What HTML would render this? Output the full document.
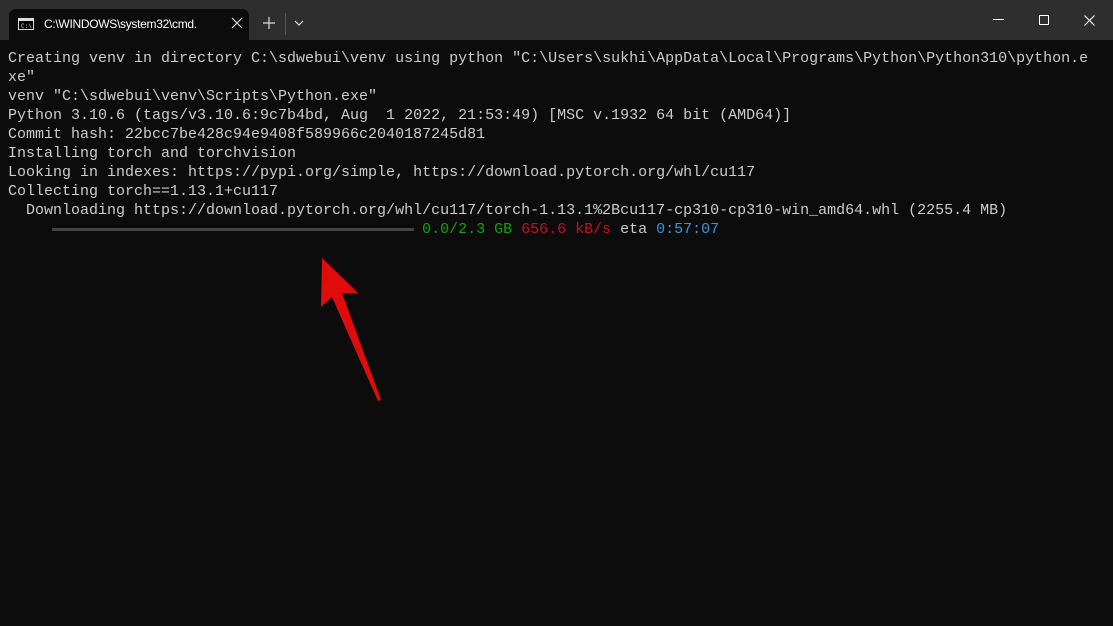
<!DOCTYPE html>
<html><head><style>
*{margin:0;padding:0;box-sizing:border-box}
body{width:1113px;height:626px;overflow:hidden;background:#0c0c0c;position:relative;font-family:"Liberation Sans",sans-serif}
#bar{position:absolute;left:0;top:0;width:1113px;height:40px;background:#2e2e2e}
#tab{position:absolute;left:9px;top:9px;width:240px;height:31px;background:#0c0c0c;border-radius:7px 7px 0 0}
#tab .t{position:absolute;left:35px;top:8px;color:#fff;font-size:12px;letter-spacing:-0.3px}
#term{position:absolute;left:8px;top:49px;font-family:"Liberation Mono",monospace;font-size:15px;line-height:19px;color:#cccccc;white-space:pre}
.g{color:#13a10e}.r{color:#c50f1f}.b{color:#3a96dd}
</style></head><body>
<div id="bar"></div>
<div id="tab">
<svg style="position:absolute;left:9px;top:9px" width="16" height="12"><rect x="0.5" y="0.5" width="15" height="11" fill="#000" stroke="#ddd"/><rect x="1" y="1" width="14" height="2" fill="#ddd"/><text x="3" y="10" font-size="6" fill="#ddd" font-family="Liberation Mono">C:\</text></svg>
<div class="t">C:\WINDOWS\system32\cmd.</div>
<svg style="position:absolute;left:222px;top:8px" width="12" height="12"><path d="M1 1L11 11M11 1L1 11" stroke="#ddd" stroke-width="1.2"/></svg>
</div>
<svg style="position:absolute;left:263px;top:17px" width="12" height="12"><path d="M6 0V12M0 6H12" stroke="#ddd" stroke-width="1.2"/></svg>
<div style="position:absolute;left:285px;top:13px;width:1px;height:22px;background:#555"></div>
<svg style="position:absolute;left:294px;top:20px" width="10" height="6"><path d="M1 1L5 5L9 1" stroke="#ddd" stroke-width="1.2" fill="none"/></svg>
<div style="position:absolute;left:993px;top:19px;width:11px;height:1px;background:#fff"></div>
<div style="position:absolute;left:1039px;top:15px;width:10px;height:10px;border:1px solid #fff"></div>
<svg style="position:absolute;left:1084px;top:15px" width="11" height="11"><path d="M0.5 0.5L10.5 10.5M10.5 0.5L0.5 10.5" stroke="#fff" stroke-width="1.1"/></svg>
<div id="term">Creating venv in directory C:\sdwebui\venv using python "C:\Users\sukhi\AppData\Local\Programs\Python\Python310\python.e
xe"
venv "C:\sdwebui\venv\Scripts\Python.exe"
Python 3.10.6 (tags/v3.10.6:9c7b4bd, Aug  1 2022, 21:53:49) [MSC v.1932 64 bit (AMD64)]
Commit hash: 22bcc7be428c94e9408f589966c2040187245d81
Installing torch and torchvision
Looking in indexes: https://pypi.org/simple, https://download.pytorch.org/whl/cu117
Collecting torch==1.13.1+cu117
  Downloading https://download.pytorch.org/whl/cu117/torch-1.13.1%2Bcu117-cp310-cp310-win_amd64.whl (2255.4 MB)
                                              <span class="g">0.0/2.3 GB</span> <span class="r">656.6 kB/s</span> eta <span class="b">0:57:07</span></div>
<div style="position:absolute;left:52px;top:228px;width:362px;height:3px;background:#444"></div>
<svg style="position:absolute;left:0;top:0" width="1113" height="626"><polygon points="322,258 358,293 342,293 381,400 378,401 332,297 321,307" fill="#e00b0b"/></svg>
</body></html>
